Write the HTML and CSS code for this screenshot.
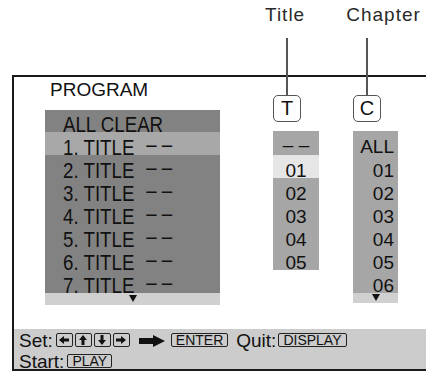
FILE: index.html
```html
<!DOCTYPE html>
<html>
	<head>
		<meta charset="utf-8">
		<title>Program</title>
		<link rel="stylesheet" href="styles.css">
	</head>
	<body>
		<div class="labels">
			<span class="label">Title</span>
			<span class="label">Chapter</span>
		</div>
		<div class="screen">
			<div class="menu">
				<div class="program">
					<div class="heading">PROGRAM</div>
					<div class="list">
						<div class="row first"><span class="txt">ALL CLEAR</span></div>
						<div class="row on"><span class="txt">1. TITLE<span class="dash">– –</span></span></div>
						<div class="row"><span class="txt">2. TITLE<span class="dash">– –</span></span></div>
						<div class="row"><span class="txt">3. TITLE<span class="dash">– –</span></span></div>
						<div class="row"><span class="txt">4. TITLE<span class="dash">– –</span></span></div>
						<div class="row"><span class="txt">5. TITLE<span class="dash">– –</span></span></div>
						<div class="row"><span class="txt">6. TITLE<span class="dash">– –</span></span></div>
						<div class="row"><span class="txt">7. TITLE<span class="dash">– –</span></span></div>
						<div class="more"><i class="down"></i></div>
					</div>
				</div>
				<div class="pick pick-title">
					<div class="badge">T</div>
					<div class="col">
						<div class="cell first"><span class="none">– –</span></div>
						<div class="cell on">01</div>
						<div class="cell">02</div>
						<div class="cell">03</div>
						<div class="cell">04</div>
						<div class="cell">05</div>
					</div>
				</div>
				<div class="pick pick-chapter">
					<div class="badge">C</div>
					<div class="col col-right">
						<div class="cell first">ALL</div>
						<div class="cell">01</div>
						<div class="cell">02</div>
						<div class="cell">03</div>
						<div class="cell">04</div>
						<div class="cell">05</div>
						<div class="cell">06</div>
						<div class="more"><i class="down"></i></div>
					</div>
				</div>
			</div>
			<div class="footer">
				<div class="line">Set:<span class="keys"><span class="key arrow"><svg class="left" viewBox="0 0 10 10"><path d="M0 5 L5 1 V3.5 H10 V6.5 H5 V9 Z"/></svg></span><span class="key arrow"><svg class="up" viewBox="0 0 10 10"><path d="M0 5 L5 1 V3.5 H10 V6.5 H5 V9 Z"/></svg></span><span class="key arrow"><svg class="down-arrow" viewBox="0 0 10 10"><path d="M0 5 L5 1 V3.5 H10 V6.5 H5 V9 Z"/></svg></span><span class="key arrow"><svg class="right" viewBox="0 0 10 10"><path d="M0 5 L5 1 V3.5 H10 V6.5 H5 V9 Z"/></svg></span></span><svg class="then" viewBox="0 0 26 12"><path d="M0 3 H14 V0 L26 6 L14 12 V9 H0 Z"/></svg><span class="key enter">ENTER</span><span class="quit">Quit:</span><span class="key display">DISPLAY</span></div>
				<div class="line">Start:<span class="key play">PLAY</span></div>
			</div>
		</div>
	</body>
</html>
```

FILE: styles.css
```css
body{
	margin: 0;
	width: 426px;
	height: 372px;
	overflow: hidden;
	background: #fff;
	color: #111;
	font-family: "Liberation Sans", Arial, sans-serif;
}
.labels{
	display: flex;
	gap: 41px;
	box-sizing: border-box;
	height: 75px;
	padding: 4px 0 0 265px;
}
.label{
	font-size: 19px;
	line-height: 22px;
	letter-spacing: 1px;
	color: #2a2a2a;
}
.screen{
	display: flex;
	flex-direction: column;
	box-sizing: border-box;
	height: 296px;
	margin-left: 12px;
	border: 2px solid #1a1a1a;
	border-right: none;
}
.menu{
	display: flex;
	height: 252px;
	padding-left: 31px;
}
.program{
	width: 175px;
}
.heading{
	margin: 2px 0 9px 5px;
	font-size: 19px;
	line-height: 22px;
}
.list{
	background: #828282;
}
.row{
	height: 23px;
	padding-left: 18px;
	font-size: 22px;
	line-height: 31px;
	white-space: nowrap;
}
/* the OSD font is a narrow face, squeeze the sans to match */
.txt{
	display: inline-block;
	transform: scaleX(0.85);
	transform-origin: left;
}
.row.first{
	height: 22px;
	line-height: 29px;
}
.row.on{
	background: #a8a8a8;
}
.dash{
	margin-left: 14px;
	position: relative;
	top: -3px;
}
.more{
	display: flex;
	justify-content: center;
	height: 12px;
	background: #d0d0d0;
}
.down{
	width: 0;
	height: 0;
	margin-top: 2px;
	border-left: 4px solid transparent;
	border-right: 4px solid transparent;
	border-top: 7px solid #111;
}
.pick{
	display: flex;
	flex-direction: column;
	padding-top: 18px;
}
.pick-title{
	margin-left: 53px;
}
.pick-chapter{
	margin-left: 34px;
}
.badge{
	position: relative;
	box-sizing: border-box;
	width: 28px;
	height: 27px;
	margin-bottom: 9px;
	border: 1.5px solid #555;
	border-radius: 5px;
	font-size: 20px;
	line-height: 24px;
	text-align: center;
}
.badge::before{
	content: "";
	position: absolute;
	left: 12px;
	bottom: 100%;
	width: 2px;
	height: 58px;
	background: #555;
}
.col{
	width: 46px;
	background: #a6a6a6;
	text-align: center;
}
.col-right{
	width: 45px;
	text-align: right;
}
.cell{
	height: 23px;
	font-size: 19px;
	line-height: 31px;
}
.none{
	position: relative;
	top: -2px;
}
.col-right .cell{
	padding-right: 4px;
}
.cell.first{
	height: 24px;
}
.cell.on{
	background: #e6e6e6;
}
.col-right .more{
	height: 10px;
}
.col-right .down{
	margin-top: 1px;
}
.footer{
	height: 40px;
	box-sizing: border-box;
	padding: 1px 0 0 5px;
	background: #cccccc;
	font-size: 19px;
	line-height: 21px;
}
.line{
	white-space: nowrap;
}
.key{
	display: inline-block;
	border: 1px solid #222;
	border-radius: 2px;
	padding: 0 4px;
	font-size: 14px;
	line-height: 12px;
	vertical-align: 2px;
}
.keys{
	margin-left: 3px;
}
.key.arrow{
	width: 17px;
	height: 14px;
	box-sizing: border-box;
	padding: 0;
	margin-right: 2px;
	vertical-align: baseline;
}
.key.arrow:last-child{
	margin-right: 0;
}
.arrow svg{
	display: block;
	width: 10px;
	height: 10px;
	margin: 1px auto 0;
	fill: #111;
}
.arrow .up{
	transform: rotate(90deg);
}
.arrow .down-arrow{
	transform: rotate(-90deg);
}
.arrow .right{
	transform: rotate(180deg);
}
.then{
	width: 26px;
	height: 12px;
	margin-left: 9px;
	fill: #111;
}
.enter{
	margin-left: 6px;
}
.quit{
	margin-left: 8px;
}
.display{
	margin-left: 2px;
}
.play{
	margin-left: 3px;
}
```
